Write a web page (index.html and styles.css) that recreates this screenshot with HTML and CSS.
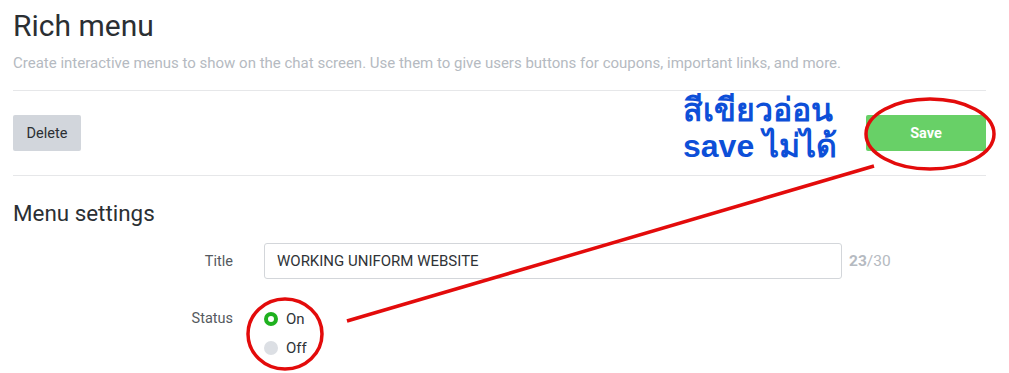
FILE: index.html
```html
<!DOCTYPE html>
<html lang="en">
<head>
<meta charset="utf-8">
<title>Rich menu</title>
<link rel="stylesheet" href="styles.css">
</head>
<body>
<div class="page">
  <header class="head">
    <h1 class="title">Rich menu</h1>
    <p class="subtitle">Create interactive menus to show on the chat screen. Use them to give users buttons for coupons, important links, and more.</p>
  </header>
  <div class="actions">
    <button class="btn btn-delete" type="button">Delete</button>
    <button class="btn btn-save" type="button">Save</button>
  </div>
  <section class="settings">
    <h2 class="section-title">Menu settings</h2>
    <div class="form-row">
      <label class="form-label">Title</label>
      <div class="form-field">
        <div class="text-input">WORKING UNIFORM WEBSITE</div>
        <span class="counter"><b>23</b>/30</span>
      </div>
    </div>
    <div class="form-row form-row-status">
      <label class="form-label">Status</label>
      <div class="radios">
        <div class="radio"><span class="dot dot-on"></span><span>On</span></div>
        <div class="radio"><span class="dot dot-off"></span><span>Off</span></div>
      </div>
    </div>
  </section>

  <div class="note">สีเขียวอ่อน<br>save ไม่ได้</div>
  <svg class="marks" width="1009" height="373" viewBox="0 0 1009 373">
    <ellipse cx="930" cy="134" rx="64" ry="35" fill="none" stroke="#e30b0b" stroke-width="3.5"/>
    <ellipse cx="285" cy="334" rx="37" ry="35" fill="none" stroke="#e30b0b" stroke-width="3.5"/>
    <line x1="347" y1="321" x2="874" y2="166" stroke="#e30b0b" stroke-width="3.5"/>
  </svg>
</div>
</body>
</html>
```

FILE: styles.css
```css
* { box-sizing: border-box; }
html, body { margin: 0; padding: 0; background: #fff; }
body { font-family: Roboto, "Liberation Sans", sans-serif; color: #333; }

.page {
  position: relative;
  width: 1009px;
  height: 373px;
  overflow: hidden;
  padding: 6px 23px 0 13px;
}

.head {
  border-bottom: 1px solid #e6e7e9;
  padding-bottom: 17px;
}
.title {
  margin: 0;
  font-size: 30px;
  line-height: 40px;
  font-weight: 400;
  color: #2b2f33;
}
.subtitle {
  margin: 7px 0 0;
  font-size: 15px;
  line-height: 20px;
  color: #b5bac1;
}

.actions {
  display: flex;
  justify-content: space-between;
  align-items: center;
  padding: 24px 0;
  border-bottom: 1px solid #e6e7e9;
}
.btn {
  height: 36px;
  border: 0;
  border-radius: 2px;
  font-family: Roboto, "Liberation Sans", sans-serif;
  font-size: 14.5px;
  padding: 0;
}
.btn-delete {
  width: 68px;
  background: #d2d6dc;
  color: #2b2f33;
}
.btn-save {
  width: 120px;
  background: #68d067;
  color: #fff;
  font-weight: 700;
}

.section-title {
  margin: 23px 0 0;
  font-size: 22.4px;
  line-height: 28px;
  font-weight: 400;
  color: #2b2f33;
}

.form-row {
  display: flex;
  align-items: center;
  gap: 31px;
  margin-top: 16px;
}
.form-label {
  width: 220px;
  text-align: right;
  font-size: 14.5px;
  color: #555a60;
}
.form-field {
  display: flex;
  align-items: center;
  gap: 7px;
}
.text-input {
  width: 578px;
  height: 36px;
  border: 1px solid #d3d6da;
  border-radius: 3px;
  padding: 0 12px;
  display: flex;
  align-items: center;
  font-size: 15px;
  color: #2f3337;
}
.counter {
  font-size: 15.5px;
  color: #b5bac1;
}
.counter b { font-weight: 700; }

.form-row-status {
  align-items: flex-start;
  margin-top: 30px;
}
.form-row-status .form-label { line-height: 20px; }
.radios {
  display: flex;
  flex-direction: column;
  gap: 9px;
}
.radio {
  display: flex;
  align-items: center;
  gap: 8px;
  height: 20px;
  font-size: 15px;
  color: #2f3337;
}
.dot {
  width: 14px;
  height: 14px;
  border-radius: 50%;
}
.dot-on {
  border: 4px solid #1fb11f;
  background: #fff;
}
.dot-off {
  background: #dcdfe4;
}

.note {
  position: absolute;
  left: 683px;
  top: 92px;
  font-family: "Liberation Sans", "Noto Sans", sans-serif;
  font-weight: 700;
  font-size: 32px;
  line-height: 36px;
  color: #0d4fd8;
}
.marks {
  position: absolute;
  left: 0;
  top: 0;
  pointer-events: none;
}
```
